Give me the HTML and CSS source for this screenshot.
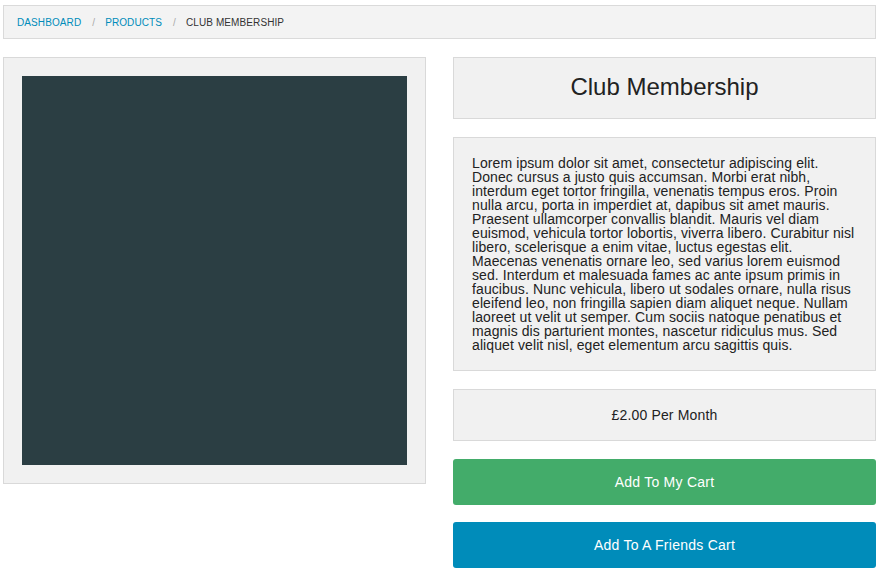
FILE: index.html
```html
<!DOCTYPE html>
<html lang="en">
<head>
<meta charset="utf-8">
<title>Club Membership</title>
<link rel="stylesheet" href="styles.css">
</head>
<body>
<nav class="breadcrumbs">
  <a href="#" class="crumb">Dashboard</a>
  <span class="sep">/</span>
  <a href="#" class="crumb">Products</a>
  <span class="sep">/</span>
  <span class="crumb current">Club Membership</span>
</nav>
<main class="product">
  <div class="image-card">
    <div class="image"></div>
  </div>
  <div class="details">
    <h1 class="panel title">Club Membership</h1>
    <p class="panel description">Lorem ipsum dolor sit amet, consectetur adipiscing elit.<br>
Donec cursus a justo quis accumsan. Morbi erat nibh,<br>
interdum eget tortor fringilla, venenatis tempus eros. Proin<br>
nulla arcu, porta in imperdiet at, dapibus sit amet mauris.<br>
Praesent ullamcorper convallis blandit. Mauris vel diam<br>
euismod, vehicula tortor lobortis, viverra libero. Curabitur nisl<br>
libero, scelerisque a enim vitae, luctus egestas elit.<br>
Maecenas venenatis ornare leo, sed varius lorem euismod<br>
sed. Interdum et malesuada fames ac ante ipsum primis in<br>
faucibus. Nunc vehicula, libero ut sodales ornare, nulla risus<br>
eleifend leo, non fringilla sapien diam aliquet neque. Nullam<br>
laoreet ut velit ut semper. Cum sociis natoque penatibus et<br>
magnis dis parturient montes, nascetur ridiculus mus. Sed<br>
aliquet velit nisl, eget elementum arcu sagittis quis.</p>
    <div class="panel price">£2.00 Per Month</div>
    <a href="#" class="button success">Add To My Cart</a>
    <a href="#" class="button primary">Add To A Friends Cart</a>
  </div>
</main>
</body>
</html>
```

FILE: styles.css
```css
* { box-sizing: border-box; }

body {
  margin: 0;
  padding: 5px 9px 0 3px;
  font-family: "Liberation Sans", Arial, sans-serif;
  color: #222;
  background: #fff;
}

.breadcrumbs {
  display: flex;
  align-items: center;
  height: 34px;
  padding: 0 13px;
  background: #f3f3f3;
  border: 1px solid #dadada;
  font-size: 10px;
  letter-spacing: 0.1px;
  text-transform: uppercase;
  margin-bottom: 18px;
}

.crumb {
  color: #008cba;
  text-decoration: none;
}

.crumb.current {
  color: #333;
}

.sep {
  color: #aaa;
  margin: 0 10px 0 11px;
}

.product {
  display: grid;
  grid-template-columns: 423px 423px;
  column-gap: 27px;
  align-items: start;
}

.image-card {
  background: #f1f1f1;
  border: 1px solid #d9d9d9;
  padding: 18px;
}

.image {
  height: 389px;
  background: #2b3e43;
}

.details {
  display: flex;
  flex-direction: column;
}

.panel {
  background: #f1f1f1;
  border: 1px solid #d9d9d9;
  margin: 0 0 18px;
}

.title {
  height: 62px;
  display: flex;
  align-items: center;
  justify-content: center;
  font-size: 24px;
  font-weight: normal;
  color: #222;
  padding-bottom: 3px;
}

.description {
  height: 234px;
  padding: 18px;
  font-size: 14px;
  line-height: 14px;
  letter-spacing: 0.1px;
  white-space: nowrap;
}

.price {
  height: 52px;
  display: flex;
  align-items: center;
  justify-content: center;
  font-size: 14px;
  letter-spacing: 0.15px;
}

.button {
  height: 46px;
  display: flex;
  align-items: center;
  justify-content: center;
  border-radius: 3px;
  color: #fff;
  font-size: 14px;
  letter-spacing: 0.25px;
  text-decoration: none;
}

.success {
  background: #43ac6a;
  margin-bottom: 17px;
}

.primary {
  background: #008cba;
}
```
